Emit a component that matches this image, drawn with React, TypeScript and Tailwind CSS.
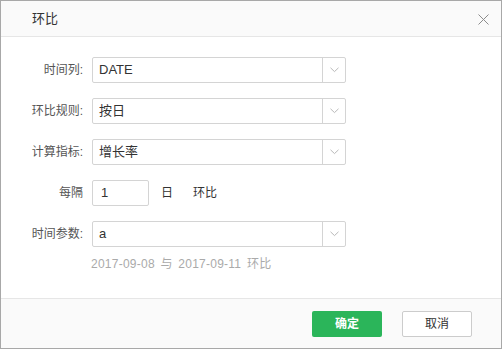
import React from 'react';

const font = { fontFamily: '"Liberation Sans", "Noto Sans CJK SC", sans-serif' };

const Chevron = () => (
  <svg width="9" height="6" viewBox="0 0 9 6" fill="none">
    <path d="M0.5 0.8 L4.5 4.6 L8.5 0.8" stroke="#b8b8b8" strokeWidth="1" />
  </svg>
);

const SelectBox: React.FC<{ value: string }> = ({ value }) => (
  <div className="flex h-[26px] w-[254px] rounded-[2px] border border-[#d4d4d4] bg-white">
    <div className="flex flex-1 items-center pl-[6px] text-[13px] text-[#333]">{value}</div>
    <div className="flex w-[23px] items-center justify-center border-l border-[#d4d4d4]">
      <Chevron />
    </div>
  </div>
);

const Row: React.FC<{ label: string; children: React.ReactNode }> = ({ label, children }) => (
  <div className="flex items-center">
    <div className="w-[82px] text-right text-[12px] text-[#555]">{label}</div>
    <div className="ml-[9px] flex items-center">{children}</div>
  </div>
);

const App: React.FC = () => {
  return (
    <div style={font} className="flex h-[349px] w-[502px] flex-col border border-[#a8a8a8] bg-white">
      {/* header */}
      <div className="flex h-[36px] items-center justify-between border-b border-[#e6e6e6] bg-[#fafafa] pl-[31px] pr-[12px]">
        <span className="text-[13px] text-[#333]">环比</span>
        <svg width="11" height="11" viewBox="0 0 11 11" className="mt-[1px]">
          <path d="M0.5 0.5 L10.5 10.5 M10.5 0.5 L0.5 10.5" stroke="#8c8c8c" strokeWidth="1" />
        </svg>
      </div>

      {/* body */}
      <div className="flex flex-1 flex-col gap-[15px] pt-[20px]">
        <Row label="时间列:">
          <SelectBox value="DATE" />
        </Row>
        <Row label="环比规则:">
          <SelectBox value="按日" />
        </Row>
        <Row label="计算指标:">
          <SelectBox value="增长率" />
        </Row>
        <Row label="每隔">
          <div className="flex h-[26px] w-[57px] items-center rounded-[2px] border border-[#d4d4d4] pl-[8px] text-[13px] text-[#333]">
            1
          </div>
          <span className="ml-[12px] text-[12px] text-[#333]">日</span>
          <span className="ml-[20px] text-[12px] text-[#333]">环比</span>
        </Row>
        <div className="flex flex-col gap-[8px]">
          <Row label="时间参数:">
            <SelectBox value="a" />
          </Row>
          <div className="pl-[90px] text-[12px] tracking-[0.25px] text-[#aaa] [word-spacing:2px]">
            2017-09-08 与 2017-09-11 环比
          </div>
        </div>
      </div>

      {/* footer */}
      <div className="flex h-[50px] items-start justify-end gap-[20px] border-t border-[#e6e6e6] bg-[#fafafa] pr-[29px] pt-[12px]">
        <button className="h-[26px] w-[70px] rounded-[2px] bg-[#2bb55a] text-[12px] font-bold text-white">确定</button>
        <button className="h-[26px] w-[70px] rounded-[2px] border border-[#cccccc] bg-white text-[12px] text-[#333]">取消</button>
      </div>
    </div>
  );
};

export default App;
